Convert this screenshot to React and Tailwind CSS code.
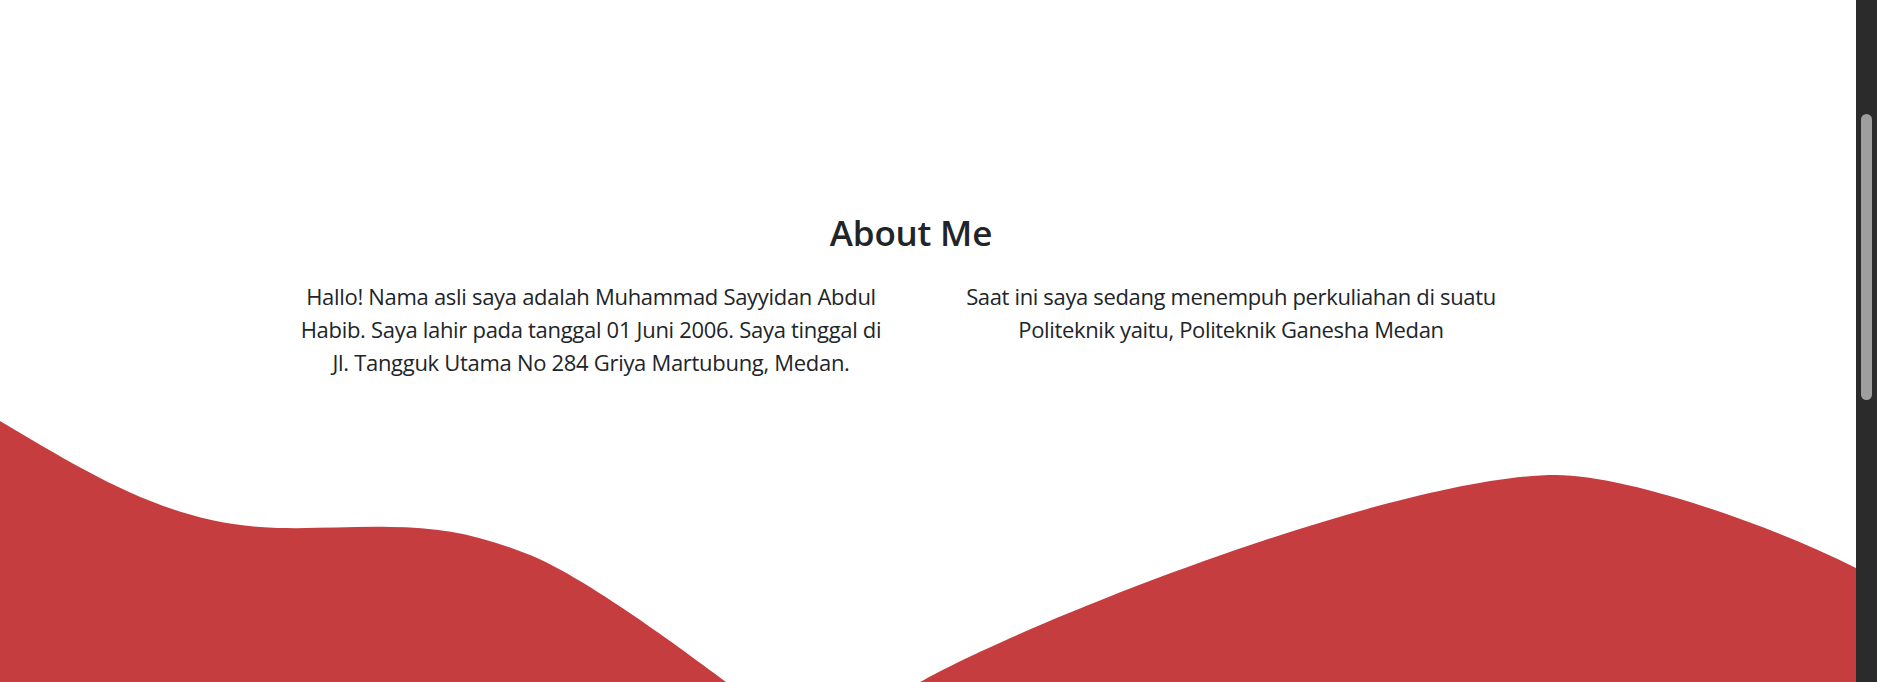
export default function App() {
  return (
    <div className="flex h-[682px] w-full overflow-hidden bg-white font-['Open_Sans',sans-serif]">
      <main className="flex w-[1856px] shrink-0 flex-col">
        <section className="ml-[271px] w-[1280px] pt-[211px] text-[#212529]">
          <h2 className="mb-[26px] text-center text-[35px] leading-[1.23] font-semibold tracking-[-0.2px]">About Me</h2>
          <div className="grid grid-cols-2">
            <p className="text-center text-[22px] leading-[33px] tracking-[-0.3px]">
              Hallo! Nama asli saya adalah Muhammad Sayyidan Abdul
              <br />
              Habib. Saya lahir pada tanggal 01 Juni 2006. Saya tinggal di
              <br />
              Jl. Tangguk Utama No 284 Griya Martubung, Medan.
            </p>
            <p className="text-center text-[22px] leading-[33px] tracking-[-0.35px]">
              Saat ini saya sedang menempuh perkuliahan di suatu
              <br />
              Politeknik yaitu, Politeknik Ganesha Medan
            </p>
          </div>
        </section>
        <svg
          className="mt-auto block h-[262px] w-[1856px] shrink-0"
          viewBox="0 0 1856 262"
          preserveAspectRatio="none"
        >
          <path
            fill="#c53d3f"
            d="M0,1 C80,48 160,100 260,107 C300,110 350,106 390,107 C440,107 480,115 530,135 C580,155 670,220 726,262 L0,262 Z"
          />
          <path
            fill="#c53d3f"
            d="M920,262 C1030,200 1400,55 1556,55 C1622,55 1760,100 1856,148 L1856,262 Z"
          />
        </svg>
      </main>
      <div className="flex w-[21px] shrink-0 justify-center bg-[#2b2b2b] pt-[114px]">
        <div className="h-[286px] w-[11px] rounded-full bg-[#9e9e9e]" />
      </div>
    </div>
  );
}
